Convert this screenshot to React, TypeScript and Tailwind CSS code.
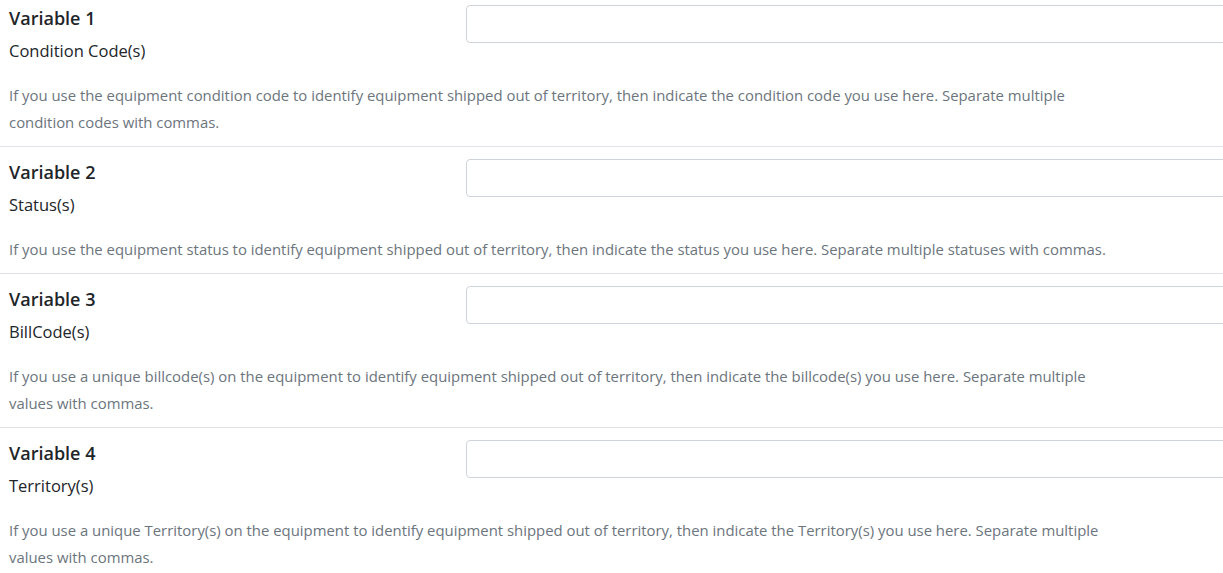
const rows = [
  {
    title: 'Variable 1',
    label: 'Condition Code(s)',
    help: 'If you use the equipment condition code to identify equipment shipped out of territory, then indicate the condition code you use here. Separate multiple condition codes with commas.',
  },
  {
    title: 'Variable 2',
    label: 'Status(s)',
    help: 'If you use the equipment status to identify equipment shipped out of territory, then indicate the status you use here. Separate multiple statuses with commas.',
  },
  {
    title: 'Variable 3',
    label: 'BillCode(s)',
    help: 'If you use a unique billcode(s) on the equipment to identify equipment shipped out of territory, then indicate the billcode(s) you use here. Separate multiple values with commas.',
  },
  {
    title: 'Variable 4',
    label: 'Territory(s)',
    help: 'If you use a unique Territory(s) on the equipment to identify equipment shipped out of territory, then indicate the Territory(s) you use here. Separate multiple values with commas.',
  },
];

function VariableRow({ title, label, help, last }: { title: string; label: string; help: string; last: boolean }) {
  return (
    <div className={last ? 'pt-[12px]' : 'border-b border-[#dee2e6] pt-[12px] pb-[10px]'}>
      <div className="flex">
        <div className="w-[466px] shrink-0 pl-[9px]">
          <div className="h-[26px] text-[18px] leading-[26px] font-semibold text-[#212529]">{title}</div>
          <div className="mt-[8px] h-[24px] text-[16.5px] leading-[24px] text-[#212529]">{label}</div>
        </div>
        <input
          type="text"
          className="h-[38px] flex-1 rounded-[4px] border border-[#ced4da] bg-white px-3 outline-none"
        />
      </div>
      <p className="mt-[19px] max-w-[1112px] pl-[9px] text-[14.9px] leading-[27px] text-[#6c757d]">{help}</p>
    </div>
  );
}

export default function App() {
  return (
    <div
      className="h-[573px] w-full overflow-hidden bg-white"
      style={{ fontFamily: '"Open Sans", "Noto Sans", sans-serif' }}
    >
      <div className="-mt-[7px] w-[1240px]">
        {rows.map((r, i) => (
          <VariableRow key={r.title} {...r} last={i === rows.length - 1} />
        ))}
      </div>
    </div>
  );
}
